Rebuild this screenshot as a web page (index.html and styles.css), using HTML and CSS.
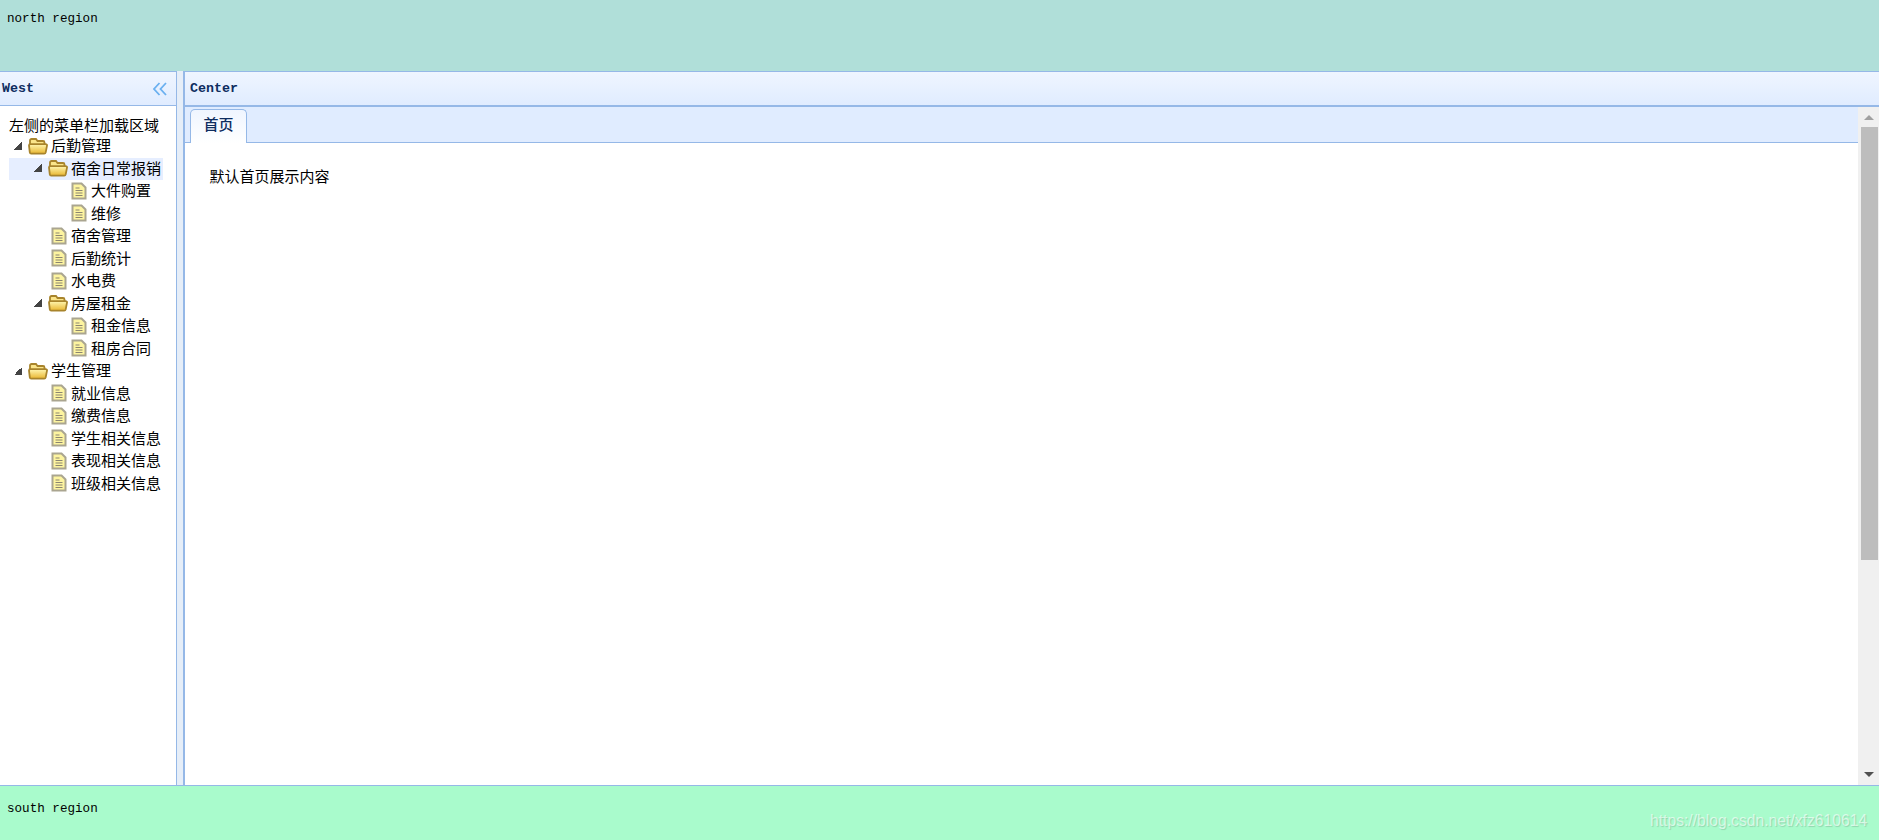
FILE: index.html
```html
<!DOCTYPE html>
<html lang="en">
<head>
    <meta charset="UTF-8">
    <meta name="viewport" content="width=device-width, initial-scale=1.0">
    <title>Layout</title>
    <link rel="stylesheet" href="styles.css">
</head>
<body>

    <svg class="defs" width="0" height="0">
        <defs>
            <linearGradient id="folderFill" x1="0" y1="0" x2="0" y2="1">
                <stop offset="0" stop-color="#fff6b0"/>
                <stop offset="1" stop-color="#e8b52f"/>
            </linearGradient>
            <symbol id="folder" viewBox="0 0 20 18">
                <path d="M2 15V3.500C2 2.500 2.700 2 3.500 2H8l1.500 2H15c1 0 1.500.6 1.500 1.500V8" fill="#fbe58a" stroke="#a8842c" stroke-width="1.800"/>
                <path d="M1 8.500c0-.8.5-1.300 1.300-1.300h15.400c.9 0 1.500.6 1.300 1.400l-1.300 6.800c-.2.8-.7 1.300-1.500 1.300H3.200c-.8 0-1.300-.5-1.400-1.300z" fill="url(#folderFill)" stroke="#a8842c" stroke-width="1.800"/>
            </symbol>
            <symbol id="file" viewBox="0 0 16 18">
                <path d="M1.500 1.500h9l4 4v11h-13z" fill="#fdf4a0" stroke="#aaa590" stroke-width="2"/>
                <path d="M4.500 6h4M4.500 8.500h7M4.500 11h7M4.500 13.500h7" stroke="#8a8570" stroke-width="1"/>
            </symbol>
        </defs>
    </svg>

    <div class="north region-text">north region</div>

    <div class="middle">
        <div class="west">
            <div class="panel-header">
                <span class="panel-title west-title">West</span>
                <svg class="collapse" width="14" height="14" viewBox="0 0 14 14" fill="none" stroke="#6ab0f0" stroke-width="1.800">
                    <path d="M6.500 1 1 7l5.500 6M13 1 7.500 7l5.500 6"/>
                </svg>
            </div>
            <div class="west-body">
                <div class="menu-title">左侧的菜单栏加载区域</div>
                <ul class="tree">
                    <li class="node lv1"><i class="arrow"></i><svg class="ico-folder"><use href="#folder"/></svg>后勤管理</li>
                    <li class="node lv2 selected"><i class="arrow"></i><svg class="ico-folder"><use href="#folder"/></svg>宿舍日常报销</li>
                    <li class="node lv3"><svg class="ico-file"><use href="#file"/></svg>大件购置</li>
                    <li class="node lv3"><svg class="ico-file"><use href="#file"/></svg>维修</li>
                    <li class="node lv2"><svg class="ico-file"><use href="#file"/></svg>宿舍管理</li>
                    <li class="node lv2"><svg class="ico-file"><use href="#file"/></svg>后勤统计</li>
                    <li class="node lv2"><svg class="ico-file"><use href="#file"/></svg>水电费</li>
                    <li class="node lv2"><i class="arrow"></i><svg class="ico-folder"><use href="#folder"/></svg>房屋租金</li>
                    <li class="node lv3"><svg class="ico-file"><use href="#file"/></svg>租金信息</li>
                    <li class="node lv3"><svg class="ico-file"><use href="#file"/></svg>租房合同</li>
                    <li class="node lv1"><i class="arrow"></i><svg class="ico-folder"><use href="#folder"/></svg>学生管理</li>
                    <li class="node lv2"><svg class="ico-file"><use href="#file"/></svg>就业信息</li>
                    <li class="node lv2"><svg class="ico-file"><use href="#file"/></svg>缴费信息</li>
                    <li class="node lv2"><svg class="ico-file"><use href="#file"/></svg>学生相关信息</li>
                    <li class="node lv2"><svg class="ico-file"><use href="#file"/></svg>表现相关信息</li>
                    <li class="node lv2"><svg class="ico-file"><use href="#file"/></svg>班级相关信息</li>
                </ul>
            </div>
        </div>

        <div class="splitter"></div>

        <div class="center">
            <div class="panel-header center-header">
                <span class="panel-title">Center</span>
            </div>
            <div class="center-body">
                <div class="tab-area">
                    <div class="tab-strip">
                        <div class="tab">首页</div>
                    </div>
                    <div class="tab-content">默认首页展示内容</div>
                </div>
                <div class="scrollbar">
                    <div class="scroll-btn scroll-btn-up"><i class="tri-up"></i></div>
                    <div class="scroll-track"><div class="scroll-thumb"></div></div>
                    <div class="scroll-btn"><i class="tri-down"></i></div>
                </div>
            </div>
        </div>
    </div>

    <div class="south region-text">south region</div>

    <div class="watermark">https://blog.csdn.net/xfz610614</div>

</body>
</html>
```

FILE: styles.css
```css
* {
    box-sizing: border-box;
}
body {
    margin: 0;
    width: 1879px;
    height: 840px;
    overflow: hidden;
    display: flex;
    flex-direction: column;
    position: relative;
    background-color: #fff;
    color: #000;
    font-family: "Noto Sans CJK SC", sans-serif;
    font-size: 15px;
}
.defs {
    position: absolute;
}
.region-text {
    font-family: "Liberation Mono", "Noto Sans CJK SC", monospace;
    font-size: 12.600px;
    padding: 12px 7px;
    line-height: 15px;
}
.north {
    height: 71px;
    background-color: #b0dfd9;
}
.south {
    height: 55px;
    padding-top: 16px;
    background-color: #a9fbcc;
    border-top: 1px solid #95b8e7;
}
.middle {
    flex: 1;
    display: flex;
    min-height: 0;
}
.west {
    width: 177px;
    display: flex;
    flex-direction: column;
    border-right: 1px solid #95b8e7;
}
.panel-header {
    height: 35px;
    flex: none;
    display: flex;
    align-items: center;
    justify-content: space-between;
    background: linear-gradient(#eff5ff, #e0ecff);
    border-top: 1px solid #95b8e7;
    border-bottom: 1px solid #95b8e7;
}
.panel-title {
    font-family: "Liberation Mono", monospace;
    font-weight: bold;
    font-size: 13.300px;
    color: #0e2d5f;
    padding-left: 5px;
}
.west-title {
    padding-left: 2px;
}
.collapse {
    margin-right: 9px;
}
.west-body {
    flex: 1;
    padding: 9px 0 0 9px;
}
.menu-title {
    height: 20px;
    line-height: 20px;
    white-space: nowrap;
}
.tree {
    list-style: none;
    margin: 0;
    padding: 0;
    width: 154px;
}
.node {
    height: 22.500px;
    padding-bottom: 3px;
    display: flex;
    align-items: center;
    white-space: nowrap;
}
.selected {
    background-color: #e6eeff;
}
.lv1 {
    padding-left: 5px;
}
.lv2 {
    padding-left: 25px;
}
.lv3 {
    padding-left: 45px;
}
.lv2 .ico-file,
.lv3 .ico-file {
    margin-left: 17px;
}
.arrow {
    width: 8px;
    height: 8px;
    margin: 2px 6px 0 0;
    background: linear-gradient(135deg, transparent 50%, #444 50%);
    flex: none;
}
.ico-folder {
    width: 20px;
    height: 18px;
    margin: 2px 3px 0 0;
    flex: none;
}
.ico-file {
    width: 16px;
    height: 18px;
    margin-top: 2px;
    margin-right: 4px;
    flex: none;
}
.splitter {
    width: 6px;
    background-color: #e6eef8;
}
.center {
    flex: 1;
    display: flex;
    flex-direction: column;
    border-left: 2px solid #95b8e7;
    min-width: 0;
}
.center-header {
    height: 36px;
    border-bottom-width: 2px;
}
.center-body {
    flex: 1;
    display: flex;
    min-height: 0;
}
.tab-area {
    flex: 1;
    min-width: 0;
}
.tab-strip {
    height: 36px;
    padding: 2px 0 0 5px;
    background-color: #e0ecff;
    border-bottom: 1px solid #95b8e7;
}
.tab {
    width: 57px;
    height: 34px;
    line-height: 27px;
    text-align: center;
    font-weight: 500;
    color: #0e2d5f;
    background: linear-gradient(#eff5ff, #fff);
    border: 1px solid #95b8e7;
    border-bottom: none;
    border-radius: 5px 5px 0 0;
}
.tab-content {
    padding: 22px 0 0 24.500px;
    line-height: 22px;
}
.scrollbar {
    width: 21px;
    flex: none;
    display: flex;
    flex-direction: column;
    background-color: #f0f0f0;
}
.scroll-btn {
    height: 21px;
    flex: none;
    display: flex;
    align-items: center;
    justify-content: center;
}
.scroll-btn-up {
    height: 20px;
}
.scroll-track {
    flex: 1;
    padding-left: 3px;
}
.scroll-thumb {
    width: 17px;
    height: 433px;
    background-color: #bdbdbd;
}
.tri-up {
    border-left: 5px solid transparent;
    border-right: 5px solid transparent;
    border-bottom: 5px solid #a0a0a0;
}
.tri-down {
    border-left: 5px solid transparent;
    border-right: 5px solid transparent;
    border-top: 5px solid #505050;
}
.watermark {
    position: absolute;
    left: 1650px;
    top: 811px;
    font-family: "Liberation Sans", sans-serif;
    font-size: 15.700px;
    line-height: 20px;
    color: rgba(255, 255, 255, 0.6);
    text-shadow: 1px 1px 1px rgba(0, 0, 0, 0.15);
    white-space: nowrap;
}
```
